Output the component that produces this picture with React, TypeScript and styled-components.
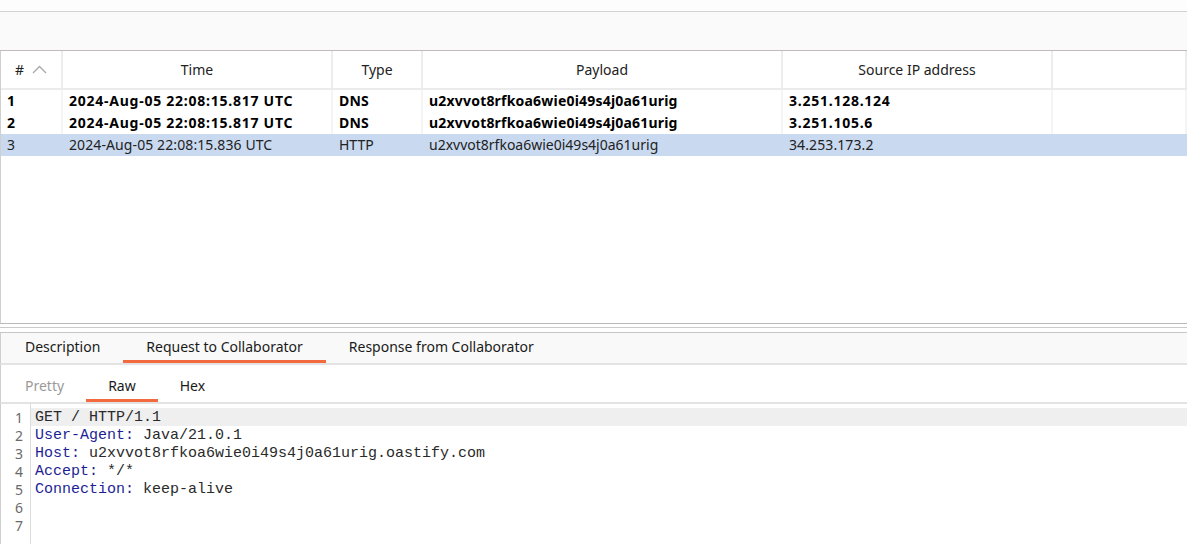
import styled, {createGlobalStyle} from 'styled-components';

const GlobalStyle = createGlobalStyle`
  html, body {
    margin: 0;
    padding: 0;
    background: #ffffff;
  }
  body {
    font-family: "Noto Sans", "Liberation Sans", sans-serif;
    font-size: 14px;
    color: #1a1a1a;
    overflow: hidden;
  }
`;

type Interaction = {
  id: number;
  time: string;
  type: string;
  payload: string;
  ip: string;
  unread: boolean;
};

const rows: Interaction[] = [
  {id: 1, time: '2024-Aug-05 22:08:15.817 UTC', type: 'DNS', payload: 'u2xvvot8rfkoa6wie0i49s4j0a61urig', ip: '3.251.128.124', unread: true},
  {id: 2, time: '2024-Aug-05 22:08:15.817 UTC', type: 'DNS', payload: 'u2xvvot8rfkoa6wie0i49s4j0a61urig', ip: '3.251.105.6', unread: true},
  {id: 3, time: '2024-Aug-05 22:08:15.836 UTC', type: 'HTTP', payload: 'u2xvvot8rfkoa6wie0i49s4j0a61urig', ip: '34.253.173.2', unread: false},
];

const columns = [
  {label: 'Time', width: 270},
  {label: 'Type', width: 90},
  {label: 'Payload', width: 360},
  {label: 'Source IP address', width: 270},
];

const requestLines: {key?: string; value: string}[] = [
  {value: 'GET / HTTP/1.1'},
  {key: 'User-Agent', value: 'Java/21.0.1'},
  {key: 'Host', value: 'u2xvvot8rfkoa6wie0i49s4j0a61urig.oastify.com'},
  {key: 'Accept', value: '*/*'},
  {key: 'Connection', value: 'keep-alive'},
  {value: ''},
  {value: ''},
];

export default function App() {
  return (
    <Page>
      <GlobalStyle />
      <TopStrip />
      <Toolbar />
      <TableArea>
        <HeaderRow>
          <HeaderCell $width={63}>
            <span>#</span>
            <svg width="15" height="9" viewBox="0 0 15 9">
              <polyline points="1,8 7.5,1.5 14,8" fill="none" stroke="#a8a8a8" strokeWidth="1.3" />
            </svg>
          </HeaderCell>
          {columns.map((c) => (
            <HeaderCell key={c.label} $width={c.width}>{c.label}</HeaderCell>
          ))}
          <HeaderCell $width={134} />
          <HeaderFill />
        </HeaderRow>
        {rows.map((r) => {
          const sel = r.id === 3;
          return (
            <Row key={r.id} $selected={sel} $bold={r.unread}>
              <Cell $width={63} $selected={sel} $numeric>{r.id}</Cell>
              <Cell $width={270} $selected={sel} $numeric>{r.time}</Cell>
              <Cell $width={90} $selected={sel}>{r.type}</Cell>
              <Cell $width={360} $selected={sel}>{r.payload}</Cell>
              <Cell $width={270} $selected={sel} $numeric>{r.ip}</Cell>
              <Cell $width={134} $selected={sel} />
            </Row>
          );
        })}
      </TableArea>
      <Splitter />
      <TabBar>
        <Tab>Description</Tab>
        <Tab $active>Request to Collaborator</Tab>
        <Tab>Response from Collaborator</Tab>
      </TabBar>
      <SubTabBar>
        <SubTab $muted>Pretty</SubTab>
        <SubTab $active>Raw</SubTab>
        <SubTab>Hex</SubTab>
      </SubTabBar>
      <Editor>
        {requestLines.map((l, i) => (
          <CodeLine key={i} $current={i === 0}>
            <LineNo>{i + 1}</LineNo>
            <Code>
              {l.key ? (
                <>
                  <Key>{l.key}:</Key> {l.value}
                </>
              ) : (
                l.value
              )}
            </Code>
          </CodeLine>
        ))}
      </Editor>
    </Page>
  );
}

const Page = styled.div`
  display: flex;
  flex-direction: column;
  width: 1187px;
  height: 544px;
  overflow: hidden;
`;

const TopStrip = styled.div`
  height: 11px;
  background: #fdfdfd;
  border-bottom: 1px solid #d4d2d2;
`;

const Toolbar = styled.div`
  height: 38px;
  background: #fafafa;
  border-bottom: 1px solid #c2baba;
`;

const TableArea = styled.div`
  height: 272px;
  border-left: 1px solid #cfcfcf;
  border-bottom: 1px solid #b9b9b9;
  background: #ffffff;
`;

const HeaderRow = styled.div`
  display: flex;
  height: 37px;
  border-bottom: 2px solid #ebebeb;
`;

const HeaderCell = styled.div<{$width: number}>`
  flex: 0 0 ${(p) => p.$width}px;
  box-sizing: border-box;
  display: flex;
  align-items: center;
  justify-content: center;
  gap: 8px;
  border-right: 2px solid #ececec;
  color: #222222;
  font-size: 14px;
  &:first-child {
    flex-basis: 62px;
  }
`;

const HeaderFill = styled.div`
  flex: 1;
`;

const Row = styled.div<{$selected?: boolean; $bold?: boolean}>`
  display: flex;
  height: 22px;
  align-items: center;
  background: ${(p) => (p.$selected ? '#c9d9ef' : '#ffffff')};
  font-weight: ${(p) => (p.$bold ? 700 : 400)};
  color: ${(p) => (p.$bold ? '#000000' : '#222222')};
  --digit-spacing: ${(p) => (p.$bold ? '0.75px' : '0.1px')};
  --text-spacing: ${(p) => (p.$bold ? '0.2px' : '0px')};
`;

const Cell = styled.div<{$width: number; $selected?: boolean; $numeric?: boolean}>`
  flex: 0 0 ${(p) => p.$width}px;
  box-sizing: border-box;
  height: 100%;
  display: flex;
  align-items: center;
  padding-left: 6px;
  padding-bottom: 1px;
  white-space: nowrap;
  letter-spacing: ${(p) => (p.$numeric ? 'var(--digit-spacing)' : 'var(--text-spacing)')};
  border-right: 2px solid ${(p) => (p.$selected ? 'transparent' : '#f4f4f4')};
  &:first-child {
    flex-basis: 62px;
  }
`;

const Splitter = styled.div`
  height: 8px;
  background: linear-gradient(#ffffff 0 3px, #cacaca 3px 4px, #ffffff 4px);
  border-bottom: 1px solid #c6c6c6;
`;

const TabBar = styled.div`
  display: flex;
  height: 30px;
  padding-left: 1px;
  background: #f9f9f9;
  border-left: 1px solid #cfcfcf;
  border-bottom: 2px solid #e3e3e3;
`;

const Tab = styled.div<{$active?: boolean}>`
  display: flex;
  align-items: center;
  padding: 0 23px 4px;
  font-size: 14px;
  color: #1a1a1a;
  box-shadow: ${(p) => (p.$active ? 'inset 0 -3px 0 #f26a3d' : 'none')};
`;

const SubTabBar = styled.div`
  display: flex;
  height: 37px;
  padding-left: 2px;
  background: #ffffff;
  border-left: 1px solid #cfcfcf;
  border-bottom: 2px solid #e3e3e3;
`;

const SubTab = styled.div<{$active?: boolean; $muted?: boolean}>`
  display: flex;
  align-items: center;
  padding: 4px 22px 0;
  font-size: 14px;
  color: ${(p) => (p.$muted ? '#9a9a9a' : '#1a1a1a')};
  box-shadow: ${(p) => (p.$active ? 'inset 0 -3px 0 #f26a3d' : 'none')};
`;

const Editor = styled.div`
  flex: 1;
  padding-top: 4px;
  border-left: 1px solid #cfcfcf;
  background: linear-gradient(90deg, #ffffff 0 29px, #dcdcdc 29px 30px, #ffffff 30px);
`;

const CodeLine = styled.div<{$current?: boolean}>`
  display: flex;
  height: 18px;
  align-items: center;
  background: ${(p) => (p.$current ? 'linear-gradient(90deg, transparent 30px, #efefef 30px)' : 'transparent')};
`;

const LineNo = styled.div`
  flex: 0 0 30px;
  box-sizing: border-box;
  text-align: right;
  padding-right: 8px;
  font-size: 14px;
  color: #6a6a6a;
`;

const Code = styled.div`
  padding-left: 4px;
  font-family: "Liberation Mono", "Courier New", monospace;
  font-size: 15px;
  color: #2a2a2a;
  white-space: pre;
`;

const Key = styled.span`
  color: #1e1e96;
`;
